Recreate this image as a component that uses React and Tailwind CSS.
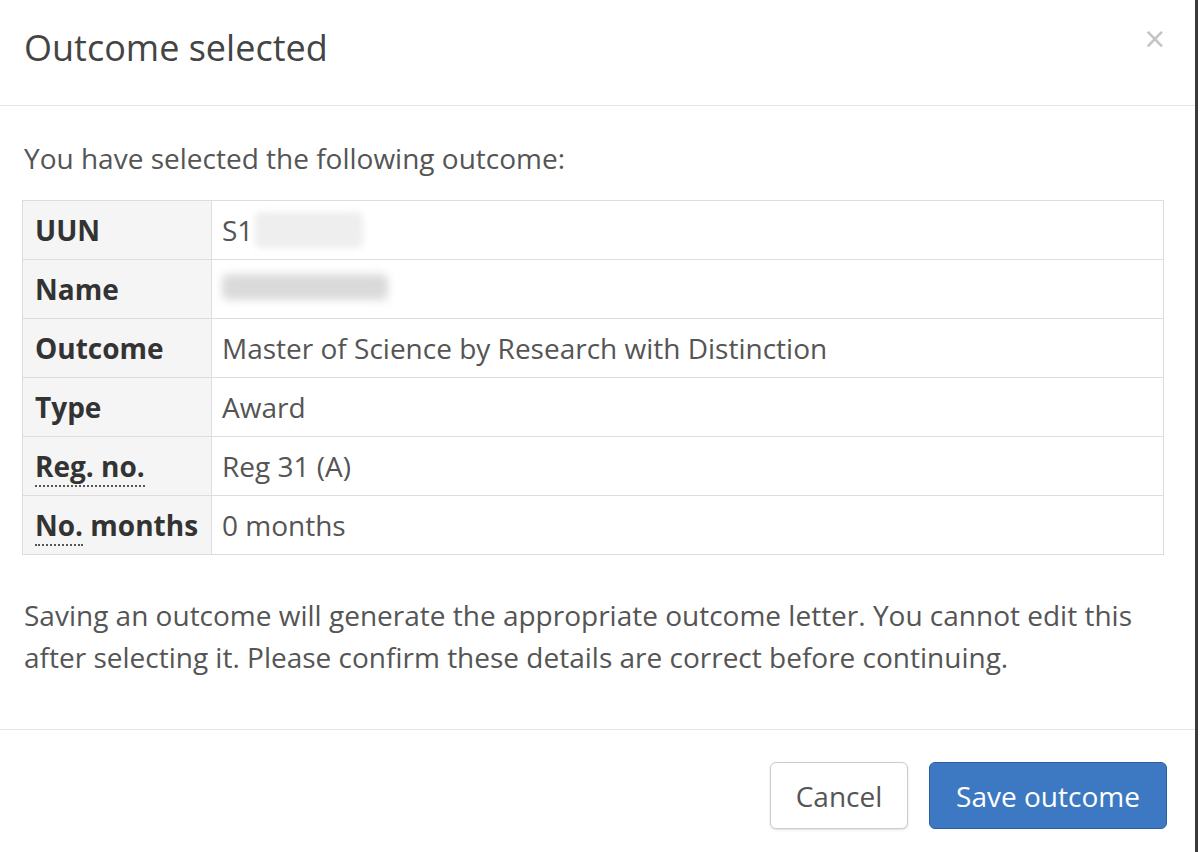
const rows = [
  { label: 'UUN', value: 'S1', blur: 'uun' },
  { label: 'Name', value: '', blur: 'name' },
  { label: 'Outcome', value: 'Master of Science by Research with Distinction' },
  { label: 'Type', value: 'Award' },
  { label: 'Reg. no.', value: 'Reg 31 (A)', abbr: 'full' },
  { label: 'No. months', value: '0 months', abbr: 'part' },
]

function Label({ row }) {
  if (row.abbr === 'full') {
    return <span className="border-b-2 border-dotted border-[#555]">{row.label}</span>
  }
  if (row.abbr === 'part') {
    return (
      <>
        <span className="border-b-2 border-dotted border-[#555]">No.</span> months
      </>
    )
  }
  return row.label
}

function Value({ row }) {
  if (row.blur === 'uun') {
    return (
      <span className="flex items-center">
        {row.value}
        <span className="ml-[2px] inline-block w-[108px] h-[36px] rounded-md bg-[#eeeeee] blur-[3px]" />
      </span>
    )
  }
  if (row.blur === 'name') {
    return <span className="inline-block w-[166px] h-[26px] rounded-md bg-[#dadada] blur-[4px] mt-[4px]" />
  }
  return row.value
}

export default function App() {
  return (
    <div
      className="w-[1200px] h-[852px] bg-white flex text-[#555]"
      style={{ fontFamily: '"Open Sans", "Noto Sans", Arial, sans-serif' }}
    >
      <div className="w-[1198px] h-full flex flex-col border-r-[3px] border-[#3a3a3a]">
        {/* Header */}
        <div className="h-[106px] shrink-0 flex items-start justify-between border-b border-[#e5e5e5] pl-[24px] pr-[30px]">
          <h1 className="text-[36px] leading-[48px] text-[#444] pt-[24px]">Outcome selected</h1>
          <button className="text-[36px] leading-none text-[#c4c4c4] mt-[21px]">×</button>
        </div>

        {/* Body */}
        <div className="flex-1 px-[22px]">
          <p className="text-[28px] leading-[42px] pt-[31px] mb-[21px] pl-[2px]">
            You have selected the following outcome:
          </p>
          <table className="w-[1142px] border-collapse text-[28px]">
            <tbody>
              {rows.map((row) => (
                <tr key={row.label} className="h-[59px]">
                  <td className="w-[189px] border border-[#dddddd] bg-[#f5f5f5] px-[12px] font-bold text-[#333] whitespace-nowrap">
                    <Label row={row} />
                  </td>
                  <td className="border border-[#dddddd] px-[10px]">
                    <Value row={row} />
                  </td>
                </tr>
              ))}
            </tbody>
          </table>
          <p className="max-w-[1120px] text-[28px] leading-[42px] mt-[39px] pl-[2px]">
            Saving an outcome will generate the appropriate outcome letter. You cannot edit this
            after selecting it. Please confirm these details are correct before continuing.
          </p>
        </div>

        {/* Footer */}
        <div className="h-[123px] shrink-0 border-t border-[#e5e5e5] flex justify-end items-start gap-[21px] pt-[32px] pr-[28px]">
          <button className="w-[138px] h-[67px] rounded-[6px] border border-[#cccccc] bg-white text-[28px] text-[#555] shadow-sm">
            Cancel
          </button>
          <button className="w-[238px] h-[67px] rounded-[6px] border border-[#2d5f9f] bg-[#3d79c2] text-[28px] text-white font-medium">
            Save outcome
          </button>
        </div>
      </div>
    </div>
  )
}
